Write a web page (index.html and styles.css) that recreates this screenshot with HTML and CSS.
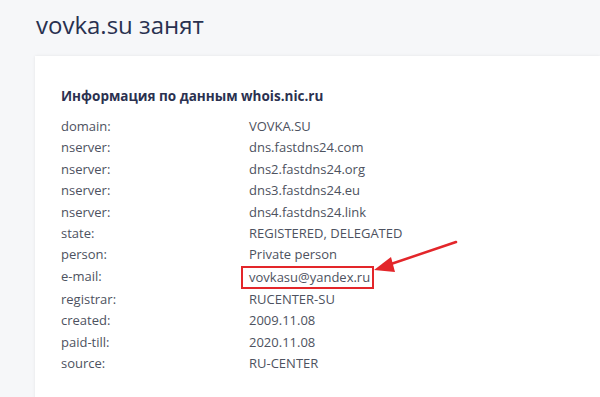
FILE: index.html
```html
<!DOCTYPE html>
<html>
<head>
  <meta charset="utf-8">
  <title>vovka.su занят</title>
  <link rel="stylesheet" href="styles.css">
</head>
<body>
  <h1 class="page-title">vovka.su занят</h1>

  <div class="whois-card">
    <h2>Информация по данным whois.nic.ru</h2>
    <div class="whois-table">
      <div class="label">domain:</div><div class="value">VOVKA.SU</div>
      <div class="label">nserver:</div><div class="value">dns.fastdns24.com</div>
      <div class="label">nserver:</div><div class="value">dns2.fastdns24.org</div>
      <div class="label">nserver:</div><div class="value">dns3.fastdns24.eu</div>
      <div class="label">nserver:</div><div class="value">dns4.fastdns24.link</div>
      <div class="label">state:</div><div class="value">REGISTERED, DELEGATED</div>
      <div class="label">person:</div><div class="value">Private person</div>
      <div class="label">e-mail:</div><div class="value"><span class="marked">vovkasu@yandex.ru</span></div>
      <div class="label">registrar:</div><div class="value">RUCENTER-SU</div>
      <div class="label">created:</div><div class="value">2009.11.08</div>
      <div class="label">paid-till:</div><div class="value">2020.11.08</div>
      <div class="label">source:</div><div class="value">RU-CENTER</div>
    </div>
  </div>

  <!-- red arrow pointing at the email -->
  <svg class="arrow" width="600" height="397" viewBox="0 0 600 397">
    <line x1="456" y1="242" x2="388" y2="265" stroke="#e3262a" stroke-width="2.5" stroke-linecap="round"/>
    <polygon points="374,270 391,257 395,272" fill="#e3262a"/>
  </svg>
</body>
</html>
```

FILE: styles.css
```css
* {
  box-sizing: border-box;
  margin: 0;
  padding: 0;
}

body {
  font-family: 'Open Sans', 'Noto Sans', sans-serif;
  background-color: #f6f7f9;
  color: #4d5260;
  width: 600px;
  height: 397px;
  overflow: hidden;
  position: relative;
}

.page-title {
  font-size: 24px;
  font-weight: 400;
  color: #293150;
  padding: 5px 0 0 36px;
  height: 56px;
  line-height: 40px;
}

.whois-card {
  background-color: #fff;
  margin-left: 35px;
  padding: 31px 26px 40px;
  box-shadow: 0 0 3px rgba(0, 0, 0, 0.08);
}

.whois-card h2 {
  font-size: 13.5px;
  font-weight: 700;
  color: #2b3150;
  margin-bottom: 11px;
}

.whois-table {
  display: grid;
  grid-template-columns: 188px auto;
  font-size: 13px;
  line-height: 21.4px;
}

.marked {
  display: inline-block;
  border: 2px solid #e3262a;
  padding: 0 2px 0 6px;
  margin-left: -8px;
  line-height: 19px;
}

.arrow {
  position: absolute;
  left: 0;
  top: 0;
}
```
